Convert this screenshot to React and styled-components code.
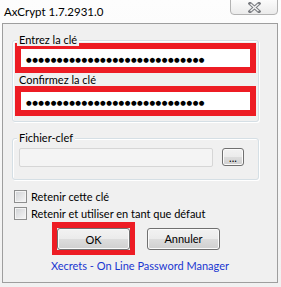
import React from 'react';
import styled, { createGlobalStyle } from 'styled-components';

const UI_FONT = `Lato, "Liberation Sans", Arial, sans-serif`;

const GlobalStyle = createGlobalStyle`
    html, body {
        margin: 0;
        padding: 0;
    }

    body {
        background: #f7f7f7;
        font-family: ${UI_FONT};
        font-size: 11px;
        color: #000;
    }
`;

const Frame = styled.div`
    width: 281px;
    height: 287px;
    overflow: hidden;
    background: linear-gradient(#fdfdfd, #f1f1f1);
`;

const TitleBar = styled.div`
    height: 23px;
    display: flex;
    justify-content: space-between;
    align-items: flex-start;
`;

const Title = styled.span`
    padding: 4px 0 0 4px;
    font-size: 11.5px;
    line-height: 15px;
`;

const CloseButton = styled.button`
    width: 48px;
    height: 16px;
    margin: -1px 3px 0 0;
    padding: 1px 0 0;
    border: 1px solid #b3b3b3;
    border-radius: 0 0 4px 4px;
    background: linear-gradient(#fbfbfb, #ebebeb);
    display: flex;
    align-items: center;
    justify-content: center;
`;

const Window = styled.div`
    box-sizing: border-box;
    width: 276px;
    height: 260px;
    margin-left: 2px;
    border: 1px solid #9e9e9e;
    background: #f0f0f0;
    display: flex;
    flex-direction: column;
`;

const GroupBox = styled.div`
    position: relative;
    box-sizing: border-box;
    width: 247px;
    margin: 16px 0 0 9px;
    padding: ${p => p.$padding};
    border: 1px solid #d5dfe5;
    border-radius: 3px;
    box-shadow: inset 1px 1px 0 #fff, 1px 1px 0 #fff;
`;

const Legend = styled.span`
    position: absolute;
    top: -8px;
    left: 4px;
    padding: 0 2px;
    background: #f0f0f0;
    line-height: 13px;
`;

const FieldLabel = styled.div`
    height: 13px;
    padding-left: 5px;
    line-height: 14px;
`;

const Highlight = styled.div`
    box-sizing: border-box;
    border-style: solid;
    border-color: #ed1c24;
    border-width: ${p => p.$widths || '6px'};
`;

const PasswordField = styled.div`
    box-sizing: border-box;
    width: 241px;
    height: 30px;
    margin-left: 1px;
    padding: 0 0 0 5px;
    border: 6px solid #ed1c24;
    background: #fff;
    display: flex;
    align-items: center;
    overflow: hidden;
`;

const Dots = styled.span`
    font-family: "DejaVu Sans", sans-serif;
    font-size: 6.5px;
    letter-spacing: 0.5px;
    line-height: 8px;
    padding-top: 3px;
    white-space: nowrap;
`;

const FileRow = styled.div`
    display: flex;
    align-items: flex-start;
    gap: 9px;
`;

const FileInput = styled.div`
    box-sizing: border-box;
    width: 194px;
    height: 19px;
    border: 1px solid #d6d6d6;
    border-radius: 2px;
    background: #f4f4f4;
`;

const Button = styled.button`
    box-sizing: border-box;
    width: ${p => p.$width};
    height: ${p => p.$height};
    padding: 0;
    border: 1px solid #707070;
    border-radius: 3px;
    background: linear-gradient(#f2f2f2 0%, #ebebeb 50%, #dddddd 50%, #cfcfcf 100%);
    box-shadow: inset 0 0 0 1px #fbfbfb;
    font-family: ${UI_FONT};
    font-size: 11px;
    line-height: 1;
    color: #000;
    display: flex;
    align-items: center;
    justify-content: center;
`;

const Checks = styled.div`
    margin: 8px 0 0 11px;
    display: flex;
    flex-direction: column;
`;

const CheckRow = styled.label`
    height: 17px;
    display: flex;
    align-items: center;
    gap: 4px;
`;

const CheckBox = styled.span`
    box-sizing: border-box;
    width: 13px;
    height: 13px;
    border: 1px solid #8e8f8f;
    background: linear-gradient(135deg, #cfd1d4, #f7f7f7);
    box-shadow: inset 0 0 0 1px #f4f4f4;
`;

const ButtonRow = styled.div`
    display: flex;
    align-items: center;
    gap: 12px;
    padding-left: 49px;
`;

const LinkText = styled.a`
    margin-top: 3px;
    text-align: center;
    line-height: 15px;
    color: #1a36d0;
    text-decoration: none;
`;

function CloseGlyph() {
    return (
        <svg width="13" height="11" viewBox="0 0 13 11">
            <path d="M2 1.5 L11 9.5 M11 1.5 L2 9.5" stroke="#7b7d82" strokeWidth="3.4" strokeLinecap="square" />
            <path d="M2.5 2 L10.5 9 M10.5 2 L2.5 9" stroke="#f2f2f2" strokeWidth="1.4" strokeLinecap="butt" />
        </svg>
    );
}

const DOTS = '●'.repeat(29);

function App() {
    return (
        <>
            <GlobalStyle />
            <Frame>
                <TitleBar>
                    <Title>AxCrypt 1.7.2931.0</Title>
                    <CloseButton aria-label="Fermer"><CloseGlyph /></CloseButton>
                </TitleBar>
                <Window>
                    <GroupBox $padding="2px 3px 5px 1px">
                        <Legend>Entrez la clé</Legend>
                        <PasswordField><Dots>{DOTS}</Dots></PasswordField>
                        <FieldLabel>Confirmez la clé</FieldLabel>
                        <PasswordField><Dots>{DOTS}</Dots></PasswordField>
                    </GroupBox>
                    <GroupBox $padding="9px 14px 12px 6px">
                        <Legend>Fichier-clef</Legend>
                        <FileRow>
                            <FileInput />
                            <Button $width="22px" $height="18px">...</Button>
                        </FileRow>
                    </GroupBox>
                    <Checks>
                        <CheckRow><CheckBox />Retenir cette clé</CheckRow>
                        <CheckRow><CheckBox />Retenir et utiliser en tant que défaut</CheckRow>
                    </Checks>
                    <ButtonRow>
                        <Highlight $widths="6px 5px 5px 5px">
                            <Button $width="73px" $height="22px">OK</Button>
                        </Highlight>
                        <Button $width="73px" $height="22px">Annuler</Button>
                    </ButtonRow>
                    <LinkText href="#">Xecrets - On Line Password Manager</LinkText>
                </Window>
            </Frame>
        </>
    );
}

export default App;
